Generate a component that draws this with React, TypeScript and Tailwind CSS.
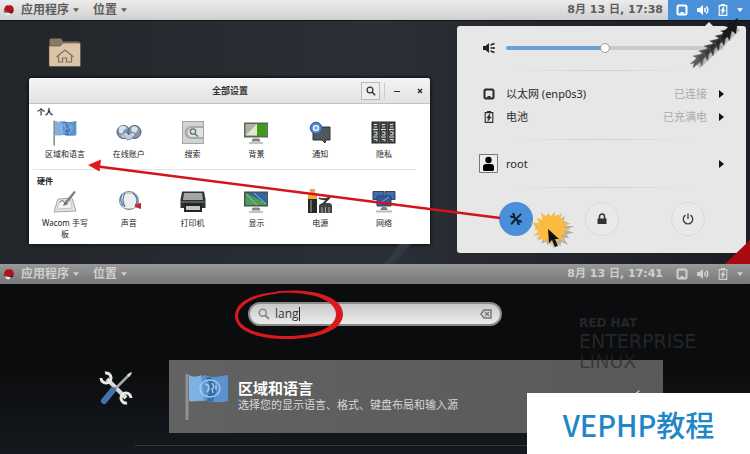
import React from "react";

const SANS = "font-['Noto_Sans','Noto_Sans_CJK_SC',sans-serif]";

/* ---------- icons ---------- */

function RedHat() {
  return (
    <svg viewBox="0 0 12 12" className="size-3" aria-hidden="true">
      <path d="M1 5.500C2 2 3.500 1 5 1.400 6 1.600 7 .8 8.400 1.600c1.700 1 2.200 2.600 2.600 5.400L9 9 2.500 7.500z" fill="#b3121d" />
      <path d="M.5 6.200c2 1.800 5.500 2.600 9.500 1.300L9 9.600C5 10 1 9 .5 6.200z" fill="#1c1416" />
      <path d="M2 8.300 8 9 6 11.500C4 11.500 2.500 10.500 2 8.300z" fill="#f3e6e2" />
    </svg>
  );
}

function Caret({ className = "" }: { className?: string }) {
  return (
    <svg viewBox="0 0 8 5" className={`h-1 w-1.5 ${className}`} aria-hidden="true">
      <path d="M0 0h8L4 5z" fill="currentColor" />
    </svg>
  );
}

function Ethernet() {
  return (
    <svg viewBox="0 0 12 12" className="size-3" aria-hidden="true">
      <path d="M2.500 1.500h7l1 1v7l-1 1h-7l-1-1v-7z" fill="none" stroke="currentColor" strokeWidth="2" />
      <path d="M4 9.800V8.500h1V8h2v.5h1v1.300z" fill="currentColor" />
    </svg>
  );
}

function Speaker({ muted = false }: { muted?: boolean }) {
  return (
    <svg viewBox="0 0 14 12" className="h-3 w-3.5" aria-hidden="true">
      <path d="M1 4h2.500L7 1v10L3.500 8H1z" fill="currentColor" />
      {muted ? (
        <path d="m8.500 3 4-1.500M8.500 6H13M8.500 9l4 1.500" stroke="currentColor" strokeWidth="1.400" />
      ) : (
        <path d="M8.500 4q1.500 2 0 4M10.300 2.500q3 3.500 0 7" fill="none" stroke="currentColor" strokeWidth="1.500" />
      )}
    </svg>
  );
}

function Battery() {
  return (
    <svg viewBox="0 0 12 12" className="size-3" aria-hidden="true">
      <path d="M4.500 1.200V.6h3v.6M2.200 1.600h7.600v9.800H2.200z" fill="none" stroke="currentColor" strokeWidth="1.100" />
      <path d="M6.800 2.800 3.800 7h1.700l-.6 3L8.200 6H6.500z" fill="currentColor" stroke="currentColor" strokeWidth=".6" />
    </svg>
  );
}

function Flag({ className }: { className: string }) {
  return (
    <svg viewBox="0 0 44 48" className={className} aria-hidden="true">
      <path d="M2 1v46" stroke="#8f9291" strokeWidth="3" />
      <path d="M4 2c7 4 12-1 19 1s12 0 20-1v26c-8 2-14 1-20 0s-12 1-19 0z" fill="#5b93d0" />
      <path d="M4 2c4 3 8 2 12 0l3 26c-5-1-9 1-15 0z" fill="#7fb0e2" />
      <path d="M21 4l4 9-3 15h6l4-12-6-12z" fill="#326da9" />
      <ellipse cx="25" cy="15.500" rx="10" ry="8.500" fill="none" stroke="#a9cbea" strokeWidth="1.300" />
      <path d="m20 11 3 1 1 4-2 3M27 10l2 4-2 2 1 4M31 12v5" fill="none" stroke="#a9cbea" strokeWidth="1.500" />
    </svg>
  );
}

function Accounts() {
  return (
    <svg viewBox="0 0 26 24" className="h-6 w-[26px]" aria-hidden="true">
      <circle cx="7.500" cy="11" r="6.500" fill="#7e98b2" stroke="#4c647c" />
      <circle cx="18.500" cy="11" r="6.500" fill="#8397a9" stroke="#4c5e6e" />
      <path d="M3 7c2-3 6-3 8 0l-3 2-2 4-3-2zM15 7c3-3 6-2 7 1l-2 4-4-1zM5 14l4-1 1 3-3 1z" fill="#d8e5ef" />
      <path d="M6 13l5 6 4-1 5-5-4-2-3 3-3-3z" fill="#c3d0dc" stroke="#5c7288" strokeWidth=".7" />
    </svg>
  );
}

function SearchTile() {
  return (
    <svg viewBox="0 0 24 26" className="h-[26px] w-6" aria-hidden="true">
      <rect x="1.500" y="1.500" width="21" height="22" fill="#d3d3d1" stroke="#a5a5a1" />
      <path d="M22 6H10a6.500 6.500 0 0 0 0 13h12z" fill="#a9aca8" />
      <path d="M22 8H11a4.500 4.500 0 0 0 0 9h11z" fill="#dfe2de" />
      <circle cx="12" cy="11.500" r="2.700" fill="none" stroke="#597566" strokeWidth="1.300" />
      <path d="m14 14 3 2.500" stroke="#597566" strokeWidth="1.500" />
    </svg>
  );
}

function Monitor({ left, right, tip }: { left: string; right: string; tip: string }) {
  return (
    <svg viewBox="0 0 26 24" className="h-6 w-[26px]" aria-hidden="true">
      <path d="M1 1.500h24v15H1z" fill="#5d665c" />
      <path d="M2.500 3h21v12h-21z" fill={left} />
      <path d="M14 3h9.500v12H14z" fill={right} />
      <path d="m3 14 11-11v11z" fill={tip} />
      <path d="M10 18h6l1 2H9zM6 22h14" stroke="#838782" fill="#838782" />
    </svg>
  );
}

function Display() {
  return (
    <svg viewBox="0 0 26 24" className="h-6 w-[26px]" aria-hidden="true">
      <path d="M1 1.500h24v15H1z" fill="#4b524c" />
      <path d="M2.500 3h21v12h-21z" fill="#4a9d5b" />
      <path d="M3 3h20.500v10.500z" fill="#2e63ae" />
      <path d="M11 3 23 14" stroke="#9acb8d" />
      <path d="M3 4 14 15" stroke="#92cb7f" />
      <path d="M10 18h6l1 2H9zM6 22h14" stroke="#838782" fill="#838782" />
    </svg>
  );
}

function Notify() {
  return (
    <svg viewBox="0 0 24 24" className="size-6" aria-hidden="true">
      <path d="M5 6h17v13h-4l-1 3-3-3H5z" fill="#54585c" stroke="#2f3236" />
      <circle cx="8" cy="7" r="5.800" fill="#4d83cf" stroke="#305d9e" />
      <circle cx="8" cy="7" r="2.600" fill="#7ca9e2" stroke="#e6effa" strokeWidth="1.500" />
    </svg>
  );
}

function Privacy() {
  return (
    <svg viewBox="0 0 26 24" className="h-6 w-[26px]" aria-hidden="true">
      {[1, 9, 17].map((x) => (
        <g key={x}>
          <rect x={x} y="1" width="7" height="21" fill="#45484a" stroke="#252728" />
          <path d={`M${x + 2} 3.500h3M${x + 2} 6h3M${x + 1} 8.500h5M${x + 2} 11h3v3h-3M${x + 1} 16h5M${x + 2} 18.500h3v2`} stroke="#dcdcda" fill="none" />
        </g>
      ))}
    </svg>
  );
}

function Tablet() {
  return (
    <svg viewBox="0 0 26 24" className="h-6 w-[26px]" aria-hidden="true">
      <path d="m6 9 14-1 4 13-22 1z" fill="#e3e4e2" stroke="#a4a6a3" />
      <path d="m8 11 10-1 2 8-15 1z" fill="#f4f4f2" stroke="#b6b8b5" strokeWidth=".7" />
      <path d="m22 1 2 1-10 13-3 1 1-3z" fill="#7d807e" />
      <path d="M8 12q3-3 4 0t4 2" fill="none" stroke="#555957" strokeWidth=".8" />
    </svg>
  );
}

function Sound() {
  return (
    <svg viewBox="0 0 26 24" className="h-6 w-[26px]" aria-hidden="true">
      <ellipse cx="13" cy="10.500" rx="9.500" ry="9" fill="#cdd0d1" stroke="#7d8285" />
      <path d="M7 4h12l2 6-3 8H8l-4-5z" fill="#eceeed" />
      <path d="M6 4q-3 6 1 12M9 3q-4 7 0 14" fill="none" stroke="#587caf" strokeWidth="1.300" />
      <path d="m19 14 6-1v6l-6-2z" fill="#bd2531" />
      <path d="M17 3q6 5 3 12" fill="none" stroke="#587caf" strokeWidth="1.500" />
    </svg>
  );
}

function Printer() {
  return (
    <svg viewBox="0 0 28 24" className="h-6 w-7" aria-hidden="true">
      <path d="m3 1.500 22 0 1.500 8V18h-25V9.500z" fill="#303234" />
      <path d="M5 3h18l1 7H4z" fill="#a3a6a6" />
      <path d="M1.500 12h25" stroke="#808484" />
      <path d="M5 13h18v9H5z" fill="#242627" />
      <path d="M7 16h14v4H7z" fill="#c5c8c6" />
    </svg>
  );
}

function Power() {
  return (
    <svg viewBox="0 0 26 26" className="h-[26px] w-[26px]" aria-hidden="true">
      <path d="M3 1h5v3h2v20H1V4h2z" fill="#252627" />
      <path d="M1 4h9v6H1z" fill="#f7a72b" />
      <path d="M3 0h5v4H3z" fill="#e0a565" />
      <path d="M4 11v12" stroke="#7b7f80" strokeWidth="1.500" />
      <path d="M12 9q6 3 11-1l-7 7" stroke="#343536" strokeWidth="1.800" fill="none" />
      <path d="M12 16l3-2h8l2 2v8H12z" fill="#404243" />
      <path d="M15 24v-6M18.500 24v-6M22 24v-6" stroke="#a9acab" />
    </svg>
  );
}

function Network() {
  return (
    <svg viewBox="0 0 26 24" className="h-6 w-[26px]" aria-hidden="true">
      <path d="M2 1.500h11v8H2zM14 1.500h10v8H14z" fill="#3e6caf" stroke="#36445e" />
      <path d="M6 6h14v10H6z" fill="#2c5aa0" stroke="#35435c" />
      <path d="m8 14 10-7" stroke="#86aad8" />
      <path d="M11 17h4l2 3H9z" fill="#7a7f83" />
      <path d="M5 20.500h16v2H5z" fill="#b7babb" />
    </svg>
  );
}

function HomeFolder() {
  return (
    <svg viewBox="0 0 34 30" className="h-[30px] w-[34px]" aria-hidden="true">
      <path d="M1.500 1.500 3 .5h10l2 3h16.500V27h-30z" fill="#8b7964" />
      <path d="M1 8h11l3-3h17.500v22.500q0 1-1 1H2q-1 0-1-1z" fill="#dbc5a9" stroke="#55483a" strokeWidth=".6" />
      <path d="m8.500 19 8.500-7 8.500 7M10.500 18v6h4v-4h4v4h5v-6" fill="none" stroke="#806f5d" strokeWidth="1.200" />
    </svg>
  );
}

function Tools({ className, plain = false }: { className: string; plain?: boolean }) {
  return (
    <svg viewBox="0 0 34 34" className={className} aria-hidden="true">
      <path d="M8 8 27 27" stroke={plain ? "#10202f" : "#d7dad7"} strokeWidth={plain ? 6 : 4} />
      <path d="M6 2a5 5 0 1 1-4 5M28 32a5 5 0 1 1 4-5" fill="none" stroke={plain ? "#10202f" : "#e6e8e5"} strokeWidth={plain ? 5 : 3} />
      <path d="M31 3 16 18" stroke={plain ? "#10202f" : "#a5aaab"} strokeWidth={plain ? 5 : 2.5} />
      <path d="m28 4 4-3 1 1-3 4z" fill={plain ? "#10202f" : "#dcdddc"} />
      <path d="m14 19-9 11" stroke={plain ? "#10202f" : "#4671ad"} strokeWidth="6" strokeLinecap="round" />
    </svg>
  );
}

function Magnifier({ className }: { className: string }) {
  return (
    <svg viewBox="0 0 12 12" className={className} aria-hidden="true">
      <circle cx="4.800" cy="4.800" r="3.500" fill="none" stroke="currentColor" strokeWidth="1.500" />
      <path d="m7.500 7.500 3.500 3.500" stroke="currentColor" strokeWidth="1.800" />
    </svg>
  );
}

/* ---------- top bar ---------- */

function TopBar({ time, dim = false }: { time: string; dim?: boolean }) {
  return (
    <header
      className={`flex h-5 items-center pl-[3px] font-['DejaVu_Sans','Noto_Sans_CJK_SC',sans-serif] text-[11px] leading-4 font-bold ${
        dim
          ? "bg-linear-to-b from-[#999] to-[#777] text-[#cfcfcf]"
          : "bg-linear-to-b from-[#ececec] to-[#d0d0d0] text-[#5c5c5c]"
      }`}
    >
      <RedHat />
      <button className="ml-1.5 flex items-center gap-1 text-[12px]">
        应用程序
        <Caret />
      </button>
      <button className="ml-3.5 flex items-center gap-1 text-[12px]">
        位置
        <Caret />
      </button>
      <button className="ml-auto">{time}</button>
      <button
        aria-label="系统菜单"
        className={`ml-[5px] flex h-5 w-[82px] items-center justify-between pr-[7px] pl-2 ${dim ? "" : "bg-[#4a90d9] text-white"}`}
      >
        <Ethernet />
        <Speaker />
        <Battery />
        <Caret />
      </button>
    </header>
  );
}

/* ---------- settings window ---------- */

type Item = { label: string; icon: React.ReactNode };

const personal: Item[] = [
  { label: "区域和语言", icon: <Flag className="h-[26px] w-6" /> },
  { label: "在线账户", icon: <Accounts /> },
  { label: "搜索", icon: <SearchTile /> },
  { label: "背景", icon: <Monitor left="#a9b5a0" right="#3f9a1c" tip="#e3e8d0" /> },
  { label: "通知", icon: <Notify /> },
  { label: "隐私", icon: <Privacy /> },
];

const hardware: Item[] = [
  { label: "Wacom 手写板", icon: <Tablet /> },
  { label: "声音", icon: <Sound /> },
  { label: "打印机", icon: <Printer /> },
  { label: "显示", icon: <Display /> },
  { label: "电源", icon: <Power /> },
  { label: "网络", icon: <Network /> },
];

function Group({ title, items }: { title: string; items: Item[] }) {
  return (
    <section>
      <h2 className="pl-1 text-[8px] leading-3 font-bold text-[#222]">{title}</h2>
      <div className="mt-0.5 grid grid-cols-6">
        {items.map((it) => (
          <button key={it.label} className="flex flex-col items-center px-2 text-[8px] leading-[11px] text-[#222]">
            <span className="flex h-[26px] items-center">{it.icon}</span>
            <span className="mt-0.5">{it.label}</span>
          </button>
        ))}
      </div>
    </section>
  );
}

function SettingsWindow() {
  return (
    <div className="mt-2.5 h-[166px] overflow-hidden rounded-t-[3px] bg-white shadow-[0_0_4px_#000]">
      <div className="flex h-[26px] items-center border-b border-[#c4c4c4] bg-linear-to-b from-[#f4f4f4] to-[#e2e2e2] text-[#333]">
        <span className="w-[70px]" />
        <h1 className="flex-1 text-center text-[9px] font-bold">全部设置</h1>
        <button aria-label="搜索" className="flex h-[18px] w-[19px] items-center justify-center border border-[#bbb] bg-[#eee]">
          <Magnifier className="size-2.5" />
        </button>
        <span className="ml-1 h-4 w-px bg-[#ccc]" />
        <button aria-label="最小化" className="flex w-6 justify-center">
          <span className="mt-0.5 h-px w-1.5 bg-[#333]" />
        </button>
        <button aria-label="关闭" className="flex w-[21px] justify-center">
          <svg viewBox="0 0 6 6" className="size-1.5">
            <path d="m1 1 4 4M5 1 1 5" stroke="#333" strokeWidth="1.500" />
          </svg>
        </button>
      </div>
      <div className="pt-0.5 pr-3.5 pl-1">
        <Group title="个人" items={personal} />
        <hr className="mt-2.5 mb-[5px] border-[#e3e3e3]" />
        <Group title="硬件" items={hardware} />
      </div>
    </div>
  );
}

/* ---------- system menu ---------- */

function Divider({ className }: { className: string }) {
  return <hr className={`mx-8 h-px border-0 bg-linear-to-r from-transparent via-[#cfcfcf] to-transparent ${className}`} />;
}

function MenuRow({ icon, label, status }: { icon: React.ReactNode; label: string; status?: string }) {
  return (
    <button className="flex h-[23px] w-full items-center text-[11px] leading-4 text-[#2a2a2a]">
      <span className="flex w-[19px] justify-center">{icon}</span>
      <span className="ml-2">{label}</span>
      <span className="mr-3 ml-auto text-[#aaa]">{status}</span>
      <svg viewBox="0 0 5 8" className="h-2 w-[5px]" aria-hidden="true">
        <path d="M0 0v8l5-4z" fill="#111" />
      </svg>
    </button>
  );
}

function SystemMenu() {
  return (
    <div className="h-[227px] w-[289px] rounded-[3px] bg-[#e7e7e7] px-[22px] pt-3 text-[#222]">
      <label className="flex h-5 items-center">
        <span className="flex w-[19px] justify-center">
          <Speaker muted />
        </span>
        <input
          type="range"
          aria-label="音量"
          defaultValue={45}
          className="ml-2 h-1 flex-1 appearance-none rounded-full bg-[linear-gradient(to_right,#6a9fd8_45%,#c9c9c9_45%)] [&::-webkit-slider-thumb]:size-2.5 [&::-webkit-slider-thumb]:appearance-none [&::-webkit-slider-thumb]:rounded-full [&::-webkit-slider-thumb]:border [&::-webkit-slider-thumb]:border-[#999] [&::-webkit-slider-thumb]:bg-white"
        />
      </label>
      <Divider className="mt-3" />
      <div className="py-[11px]">
        <MenuRow icon={<Ethernet />} label="以太网 (enp0s3)" status="已连接" />
        <MenuRow icon={<Battery />} label="电池" status="已充满电" />
      </div>
      <Divider className="" />
      <div className="py-3">
        <MenuRow
          label="root"
          icon={
            <svg viewBox="0 0 19 19" className="size-[19px]" aria-hidden="true">
              <path d="M.5.5h18v18H.5z" fill="#eee" stroke="#777" />
              <circle cx="9.500" cy="6" r="3.200" fill="#000" />
              <path d="M4 16v-3q0-3 3-3h5q3 0 3 3v3l-1 1H5z" fill="#000" />
            </svg>
          }
        />
      </div>
      <Divider className="" />
      <div className="flex justify-center gap-[52px] pt-3.5">
        <button aria-label="设置" className="flex size-[34px] items-center justify-center rounded-full bg-[#4a90d9]">
          <Tools plain className="size-3" />
        </button>
        <button aria-label="锁定" className="flex size-[34px] items-center justify-center rounded-full border border-[#dadada] bg-[#e9e9e9]">
          <svg viewBox="0 0 10 12" className="h-3 w-2.5">
            <path d="M.5 5.500h9V11h-9z" fill="#333" />
            <path d="M2.500 6V3.500a2.500 2.500 0 0 1 5 0V6" fill="none" stroke="#333" strokeWidth="1.500" />
          </svg>
        </button>
        <button aria-label="关机" className="flex size-[34px] items-center justify-center rounded-full border border-[#dadada] bg-[#e9e9e9]">
          <svg viewBox="0 0 12 12" className="size-3">
            <path d="M3.500 2.200a4.700 4.700 0 1 0 5 0M6 .5V6" fill="none" stroke="#444" strokeWidth="1.400" />
          </svg>
        </button>
      </div>
    </div>
  );
}

/* ---------- annotations ---------- */

const rays = Array.from({ length: 34 }, (_, i) => {
  const a = (i * Math.PI) / 17 + 0.1;
  const r = i % 2 ? 12 + (i % 3) : [20, 17, 21, 18, 20, 17, 19][(i / 2) % 7];
  return `${(551 + r * Math.cos(a)).toFixed(1)},${(228 + r * 0.9 * Math.sin(a)).toFixed(1)}`;
}).join(" ");

/* one feather of the dark arrow, its point at the origin */
const feather = "M0 0-12 3-8 5-15 11-11 10-12 15-5 9-3 13z";

function TopAnnotations() {
  return (
    <svg viewBox="0 0 750 264" className="pointer-events-none absolute top-0 right-0 h-[264px] w-[750px]" aria-hidden="true">
      <path d="M500 218 98 166.500" stroke="#d3141b" strokeWidth="2.600" />
      <path d="m88 165 13-5.500-1.500 12z" fill="#e01a1f" />
      <polygon points={rays} fill="#777" opacity=".5" transform="translate(3 3)" />
      <polygon points={rays} fill="#f9bc3f" />
      <path d="m548 229 1 14 3-3 3 7 3-1-3-7h4z" fill="#111" />
      <path d="m705 26 4-4 4 4z" fill="#e7e7e7" />
      <path d="m698 66 40-38" stroke="#555" strokeWidth="6" opacity=".3" />
      {[0, 1, 2, 3, 4, 5].map((i) => (
        <path
          key={i}
          d={feather}
          fill={["#5a5c5e", "#46494b", "#36393b", "#2b2e30", "#222527", "#1a1d1f"][i]}
          stroke="#777"
          strokeWidth=".4"
          transform={`translate(${705 + i * 5.5} ${53 - i * 5})`}
        />
      ))}
      <path d="m738 18-14 8 4 1-6 7 4 2 6-5 4 3z" fill="#15181b" />
    </svg>
  );
}

/* ---------- page ---------- */

function Desktop() {
  return (
    <section className="relative bg-linear-to-r from-[#22262b] via-[#2b3036] to-[#1b1d22]">
      <TopBar time="8月 13 日, 17:38" />
      <svg viewBox="0 0 380 24" className="absolute right-0 bottom-0 h-6 w-[380px]" aria-hidden="true">
        <path d="M355 24 380 0v24z" fill="#a80b12" />
        <path d="M13 24 29 4h12L25 24z" fill="#30373e" />
        <path d="m18 24 16-20" stroke="#3d464d" />
      </svg>
      <div className="flex gap-[27px] border-t border-[#101316] pt-[5px] pr-1 pb-[11px] pl-[29px]">
        <main className="flex-1">
          <button aria-label="主文件夹" className="mt-3 ml-[19px] block h-[30px]">
            <HomeFolder />
          </button>
          <SettingsWindow />
        </main>
        <SystemMenu />
      </div>
      <TopAnnotations />
    </section>
  );
}

function Overview() {
  return (
    <section className="relative h-[190px] bg-[#0b0c0d]">
      <TopBar time="8月 13 日, 17:41" dim />
      <div className="relative h-[170px] bg-linear-to-b from-transparent via-transparent to-[#171d24]/80 pt-[18px]">
        <div className="mx-auto flex h-6 w-[254px] items-center rounded-full border-2 border-[#8a8a8a] bg-linear-to-b from-[#c8c8c8] to-[#ececec] px-2 text-[#333]">
          <Magnifier className="size-3 text-[#888]" />
          <input
            type="text"
            aria-label="搜索"
            defaultValue="lang"
            className="ml-[5px] field-sizing-content bg-transparent font-['Open_Sans',sans-serif] text-[12px] leading-4 outline-none"
          />
          <span className="h-3.5 w-px bg-[#222]" />
          <button aria-label="清除" className="ml-auto">
            <svg viewBox="0 0 12 10" className="h-2.5 w-3">
              <path d="M4 1h7v8H4L1 5z" fill="none" stroke="#777" strokeWidth="1.500" />
              <path d="m5 3 4 4M9 3 5 7" stroke="#777" strokeWidth="1.300" />
            </svg>
          </button>
        </div>
        <div className="mt-[34px] flex pr-[87px] pl-[99px]">
          <Tools className="mt-[11px] size-[34px]" />
          <button className="ml-9 flex h-[73px] flex-1 items-start bg-linear-to-r from-[#626262] to-[#595959] pt-[13px] pl-4 text-left">
            <Flag className="h-12 w-[44px]" />
            <span className="mt-[5px] ml-[9px] flex flex-col">
              <strong className="text-[15px] leading-5 font-bold text-white">区域和语言</strong>
              <span className="text-[11px] leading-[14px] text-[#d6d6d6]">选择您的显示语言、格式、键盘布局和输入源</span>
            </span>
          </button>
        </div>
        <hr className="mt-3 ml-[135px] border-[#34383c]" />
      </div>
      <div className="pointer-events-none absolute top-[51px] right-[52px] w-[119px] font-['DejaVu_Sans',sans-serif] text-[#242628]">
        <p className="text-[12px] leading-4 font-bold">RED HAT</p>
        <p className="text-[19px] leading-5">ENTERPRISE</p>
        <p className="text-[19px] leading-5 opacity-60">LINUX</p>
      </div>
      <svg viewBox="0 0 112 54" className="pointer-events-none absolute top-6 left-1/2 -ml-[142px] h-[54px] w-28" aria-hidden="true">
        <path
          fillRule="evenodd"
          d="M46 3C84 0 110 10 110 26S86 51 54 51 2 42 2 28 20 6 42 4zM42 6C22 8 5 17 5 28s19 20 49 20 49-9 49-22S80 3 46 5z"
          fill="#d9181f"
        />
      </svg>
      <svg viewBox="0 0 8 5" className="absolute right-[110px] bottom-[61px] h-[3px] w-[5px]" aria-hidden="true">
        <path d="M1 5 7 0v3L4 5z" fill="#e6dc7c" />
      </svg>
      <aside className="absolute right-0 bottom-0 flex h-[61px] w-[223px] items-center justify-center bg-white font-['Noto_Sans_CJK_SC',sans-serif] text-[29px] leading-9 font-medium text-[#1f86c7]">
        VEPHP教程
      </aside>
    </section>
  );
}

export default function App() {
  return (
    <div lang="zh-CN" className={SANS}>
      <Desktop />
      <Overview />
    </div>
  );
}
